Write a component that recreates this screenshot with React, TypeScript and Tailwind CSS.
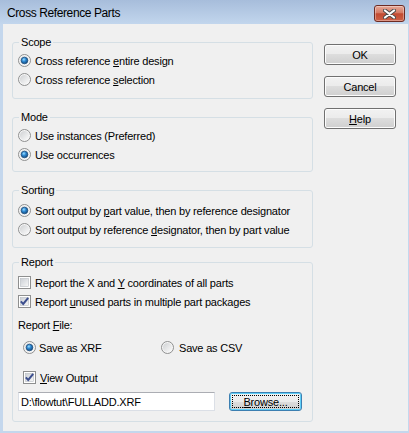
import React, { useId } from "react";

function Radio({ checked }: { checked?: boolean }) {
  const id = useId().replace(/:/g, "");
  return (
    <svg width="13" height="13" viewBox="0 0 13 13" className="shrink-0">
      <defs>
        <linearGradient id={`${id}a`} x1="0" y1="0" x2="1" y2="1">
          <stop offset="0" stopColor="#cfd1d3" />
          <stop offset="1" stopColor="#fbfbfb" />
        </linearGradient>
        <radialGradient id={`${id}b`} cx="0.4" cy="0.35" r="0.65">
          <stop offset="0" stopColor="#9fe0ff" />
          <stop offset="0.45" stopColor="#2f8ad4" />
          <stop offset="1" stopColor="#164b7e" />
        </radialGradient>
      </defs>
      <circle cx="6.5" cy="6.5" r="6" fill="#f6f6f6" stroke="#8e8f8f" />
      <circle cx="6.5" cy="6.5" r="4.6" fill={`url(#${id}a)`} />
      {checked && <circle cx="6.5" cy="6.5" r="3.3" fill={`url(#${id}b)`} stroke="#1d4f80" strokeWidth="0.8" />}
    </svg>
  );
}

function Check({ checked }: { checked?: boolean }) {
  const id = useId().replace(/:/g, "");
  return (
    <svg width="13" height="13" viewBox="0 0 13 13" className="shrink-0">
      <defs>
        <linearGradient id={`${id}a`} x1="0" y1="0" x2="1" y2="1">
          <stop offset="0" stopColor="#cbcfd5" />
          <stop offset="1" stopColor="#f7f7f7" />
        </linearGradient>
      </defs>
      <rect x="0.5" y="0.5" width="12" height="12" fill="#ffffff" stroke="#8e8f8f" />
      <rect x="2.5" y="2.5" width="8" height="8" fill={`url(#${id}a)`} stroke="#b8bcc2" strokeWidth="0.6" />
      {checked && (
        <path d="M2.8 6.4 L5.2 9 L10.2 2.8" fill="none" stroke="#3d4f8e" strokeWidth="2" strokeLinejoin="miter" />
      )}
    </svg>
  );
}

function Group({ label, className, children }: { label: string; className?: string; children: React.ReactNode }) {
  return (
    <div className={`relative border border-[#d5dfe5] rounded-[3px] pl-[5px] ${className ?? ""}`}>
      <span className="absolute left-[6px] top-[-8px] px-[2px] bg-[#f0f0f0]">{label}</span>
      {children}
    </div>
  );
}

function Row({ children, className }: { children: React.ReactNode; className?: string }) {
  return <div className={`flex items-center h-[19px] gap-[4px] ${className ?? ""}`}>{children}</div>;
}

function Btn({ children }: { children: React.ReactNode }) {
  return (
    <div className="w-[72px] h-[21px] rounded-[3px] border border-[#707070] shadow-[inset_0_0_0_1px_#fcfcfc] bg-[linear-gradient(#f2f2f2_0%,#ebebeb_50%,#dddddd_50%,#cfcfcf_100%)] flex items-center justify-center">
      {children}
    </div>
  );
}

export default function App() {
  return (
    <div className="w-[409px] h-[433px] flex flex-col bg-[#c4d7ed] font-['Liberation_Sans',Arial,sans-serif] text-[11px] leading-[14px] text-black tracking-[-0.2px]">
      <div className="h-[24px] shrink-0 flex items-start justify-between bg-[linear-gradient(#a7bddb,#c2d6ed)] pl-[7px] pr-[4px]">
        <span className="mt-[6px] text-[12px] tracking-[-0.4px]">Cross Reference Parts</span>
        <div className="mt-[5px] w-[31px] h-[17px] rounded-[3px] border border-[#6d2b23] bg-[linear-gradient(#e6a998_0%,#d57b66_45%,#c24a31_52%,#cd6147_100%)] shadow-[inset_0_0_0_1px_rgba(255,255,255,0.35)] flex items-center justify-center">
          <svg width="13" height="10" viewBox="0 0 13 10">
            <path d="M2 1.5 L11 8.5 M11 1.5 L2 8.5" stroke="#4a4a4a" strokeWidth="4" strokeLinecap="round" />
            <path d="M2 1.5 L11 8.5 M11 1.5 L2 8.5" stroke="#ffffff" strokeWidth="2.2" strokeLinecap="round" />
          </svg>
        </div>
      </div>
      <div className="flex-1 ml-[3px] mr-[1px] mb-[2px] bg-[#f0f0f0] flex pl-[9px] pt-[18px]">
        <div className="w-[301px] flex flex-col">
          <Group label="Scope" className="pt-[8px] pb-[9px]">
            <Row>
              <Radio checked />
              <span>Cross reference <u>e</u>ntire design</span>
            </Row>
            <Row>
              <Radio />
              <span>Cross reference <u>s</u>election</span>
            </Row>
          </Group>
          <Group label="Mode" className="mt-[18px] pt-[8px] pb-[7px]">
            <Row>
              <Radio />
              <span>Use instances (Preferred)</span>
            </Row>
            <Row>
              <Radio checked />
              <span>Use occurrences</span>
            </Row>
          </Group>
          <Group label="Sorting" className="mt-[18px] pt-[10px] pb-[8px]">
            <Row>
              <Radio checked />
              <span>Sort output by <u>p</u>art value, then by reference designator</span>
            </Row>
            <Row>
              <Radio />
              <span>Sort output by reference <u>d</u>esignator, then by part value</span>
            </Row>
          </Group>
          <Group label="Report" className="mt-[14px] pt-[10px] pb-[10px]">
            <Row>
              <Check />
              <span>Report the X and <u>Y</u> coordinates of all parts</span>
            </Row>
            <Row>
              <Check checked />
              <span>Report <u>u</u>nused parts in multiple part packages</span>
            </Row>
            <Row className="mt-[4px]">
              <span>Report <u>F</u>ile:</span>
            </Row>
            <Row className="mt-[4px] pl-[5px] gap-0">
              <div className="w-[134px] flex items-center gap-[3px]">
                <Radio checked />
                <span>Save as XRF</span>
              </div>
              <div className="flex items-center gap-[5px]">
                <Radio />
                <span>Save as CSV</span>
              </div>
            </Row>
            <Row className="mt-[11px] pl-[5px] gap-[3px]">
              <Check checked />
              <span><u>V</u>iew Output</span>
            </Row>
            <div className="mt-[5px] flex items-center">
              <div className="w-[197px] h-[19px] bg-white border border-[#dbdfe6] border-t-[#abadb3] flex items-center pl-[2px]">
                D:\flowtut\FULLADD.XRF
              </div>
              <div className="ml-[14px] relative w-[73px] h-[19px] rounded-[3px] border border-[#3c7fb1] shadow-[inset_0_0_0_1px_#5fcff8] bg-[linear-gradient(#f2f2f2_0%,#ebebeb_50%,#dddddd_50%,#cfcfcf_100%)] flex items-center justify-center">
                <span className="absolute inset-[2px] border border-dotted border-black" />
                <span><u>B</u>rowse...</span>
              </div>
            </div>
          </Group>
        </div>
        <div className="ml-[11px] pt-[2px] flex flex-col gap-[11px]">
          <Btn>OK</Btn>
          <Btn>Cancel</Btn>
          <Btn>
            <span><u>H</u>elp</span>
          </Btn>
        </div>
      </div>
    </div>
  );
}
